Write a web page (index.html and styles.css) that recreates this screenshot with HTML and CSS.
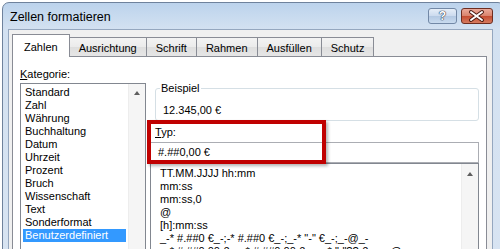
FILE: index.html
```html
<!DOCTYPE html>
<html lang="de">
<head>
    <meta charset="UTF-8">
    <meta name="viewport" content="width=device-width, initial-scale=1.0">
    <title>Zellen formatieren</title>
    <link rel="stylesheet" href="styles.css">
</head>
<body>

    <!-- Dialogfenster -->
    <div class="window">
        <div class="titlebar">
            <span class="title">Zellen formatieren</span>
            <div class="caption">
                <span class="cap-btn cap-help">?</span>
                <span class="cap-btn cap-close">
                    <svg width="30" height="14" viewBox="0 0 30 14">
                        <path d="M9 3 L20 11 M20 3 L9 11" stroke="#4a1a12" stroke-width="4" stroke-linecap="round"/>
                        <path d="M9 3 L20 11 M20 3 L9 11" stroke="#fff" stroke-width="2" stroke-linecap="round"/>
                    </svg>
                </span>
            </div>
        </div>

        <div class="client">
            <!-- Registerkarten -->
            <div class="tabs">
                <span class="tab active">Zahlen</span>
                <span class="tab">Ausrichtung</span>
                <span class="tab">Schrift</span>
                <span class="tab">Rahmen</span>
                <span class="tab">Ausfüllen</span>
                <span class="tab">Schutz</span>
            </div>

            <div class="panel">
                <!-- Kategorie -->
                <div class="col-left">
                    <div class="label"><u>K</u>ategorie:</div>
                    <div class="listbox categories">
                        <ul class="items">
                            <li>Standard</li>
                            <li>Zahl</li>
                            <li>Währung</li>
                            <li>Buchhaltung</li>
                            <li>Datum</li>
                            <li>Uhrzeit</li>
                            <li>Prozent</li>
                            <li>Bruch</li>
                            <li>Wissenschaft</li>
                            <li>Text</li>
                            <li>Sonderformat</li>
                            <li class="selected">Benutzerdefiniert</li>
                        </ul>
                        <div class="scrollbar"><span class="arrow-up"></span></div>
                    </div>
                </div>

                <!-- Beispiel und Typ -->
                <div class="col-right">
                    <div class="sample">
                        <div class="sample-title">Beispiel</div>
                        <div class="sample-value">12.345,00 €</div>
                    </div>
                    <div class="type-label"><u>T</u>yp:</div>
                    <div class="type-input">#.##0,00 €</div>
                    <div class="listbox formats">
                        <ul class="items">
                            <li>TT.MM.JJJJ hh:mm</li>
                            <li>mm:ss</li>
                            <li>mm:ss,0</li>
                            <li>@</li>
                            <li>[h]:mm:ss</li>
                            <li>_-* #.##0 €_-;-* #.##0 €_-;_-* "-" €_-;_-@_-</li>
                            <li>_-* #.##0,00 €_-;-* #.##0,00 €_-;_-* "-"?? €_-;_-@_-</li>
                        </ul>
                        <div class="scrollbar"><span class="arrow-up"></span></div>
                    </div>
                </div>
            </div>
        </div>
    </div>

    <!-- Markierung -->
    <div class="highlight-box"></div>

</body>
</html>
```

FILE: styles.css
```css
* {
    box-sizing: border-box;
}

body {
    margin: 0;
    width: 500px;
    height: 249px;
    overflow: hidden;
    position: relative;
    background-color: #fff;
    font-family: "Liberation Sans", Arial, sans-serif;
    font-size: 11px;
    color: #000;
}

ul {
    list-style: none;
    margin: 0;
}

/* Fenster */
.window {
    margin: 2px 0 0 2px;
    width: 503px;
    height: 270px;
    border: 1px solid #6f829c;
    border-radius: 7px 7px 0 0;
    background: linear-gradient(to bottom, #bcd3ec, #d3e1f1 26px, #d8e4f2);
}

.titlebar {
    display: flex;
    align-items: flex-start;
    height: 26px;
    padding: 0 11px 0 7px;
}

.title {
    font-size: 12.5px;
    line-height: 26px;
    padding-top: 1px;
}

.caption {
    display: flex;
    gap: 4px;
    margin: 5px 0 0 auto;
}

.cap-btn {
    display: flex;
    align-items: center;
    justify-content: center;
    height: 16px;
    border-radius: 3px;
}

.cap-help {
    width: 29px;
    border: 1px solid #7288a6;
    background: linear-gradient(to bottom, #e6eef8, #cbdaee 50%, #b3c8e2 51%, #c9dbef);
    color: #fff;
    font-size: 12px;
    font-weight: bold;
    text-shadow: 0 0 1px #2c3a4e, 0 0 1px #2c3a4e, 0 0 1px #2c3a4e;
}

.cap-close {
    width: 32px;
    border: 1px solid #6e2d20;
    background: linear-gradient(to bottom, #eba999, #d9826c 50%, #c54b30 51%, #d67b60);
}

/* Client-Bereich */
.client {
    margin-left: 5px;
    width: 485px;
    height: 240px;
    border: 1px solid #95a7bf;
    background-color: #f0f0f0;
    padding: 4px 5px 0 3px;
}

.tabs {
    display: flex;
    align-items: flex-start;
    height: 22px;
    position: relative;
    z-index: 1;
}

.tab {
    margin: 3px 0 0 -1px;
    height: 19px;
    padding: 4px 9px 0;
    line-height: 13px;
    border: 1px solid #898c95;
    border-bottom: none;
    background: linear-gradient(to bottom, #f3f3f3, #ebebeb 50%, #dedede 51%, #e6e6e6);
    white-space: nowrap;
}

.tab.active {
    margin: 0;
    height: 23px;
    padding: 6px 11px 0;
    background: #fff;
    position: relative;
    z-index: 2;
}

.panel {
    display: flex;
    gap: 4px;
    height: 220px;
    padding: 11px 7px 0;
    border: 1px solid #898c95;
    background-color: #fff;
}

.col-left {
    width: 126px;
}

.label {
    line-height: 13px;
}

.listbox {
    display: flex;
    border: 1px solid #828790;
    height: 190px;
}

.categories {
    margin-top: 2px;
}

.items {
    flex: 1;
    padding: 2px 2px 0;
}

.items li {
    height: 13px;
    line-height: 13px;
    padding-left: 2px;
    white-space: nowrap;
}

.items li.selected {
    background-color: #3399ff;
    color: #fff;
}

.scrollbar {
    width: 17px;
    display: flex;
    justify-content: center;
    background-color: #f5f5f5;
    border-left: 1px solid #ededed;
}

.arrow-up {
    margin-top: 7px;
    width: 0;
    height: 0;
    border-left: 3.5px solid transparent;
    border-right: 3.5px solid transparent;
    border-bottom: 4px solid #5e5e5e;
}

/* Rechte Spalte */
.col-right {
    flex: 1;
    display: flex;
    flex-direction: column;
}

.sample {
    margin: 20px 0 0 5px;
    height: 33px;
    border: 1px solid #d5dfe5;
    border-radius: 3px;
}

.sample-title {
    width: fit-content;
    margin: -7px 0 0 4px;
    padding: 0 1px;
    line-height: 13px;
    background-color: #fff;
}

.sample-value {
    margin: 9px 0 0 7px;
    line-height: 13px;
}

.type-label {
    margin-top: 5px;
    padding-left: 5px;
    line-height: 13px;
}

.type-input {
    margin-top: 3px;
    height: 21px;
    line-height: 19px;
    padding-left: 7px;
    border: 1px solid #abadb3;
}

.formats {
    height: 100px;
}

.formats .items {
    padding: 3px 0 0 7px;
}

.formats .arrow-up {
    margin-top: 8px;
}

/* Rote Markierung */
.highlight-box {
    position: absolute;
    left: 147px;
    top: 120px;
    width: 179px;
    height: 44px;
    border: 4px solid #c00000;
    box-shadow: 2px 2px 3px rgba(0, 0, 0, 0.3);
}
```
